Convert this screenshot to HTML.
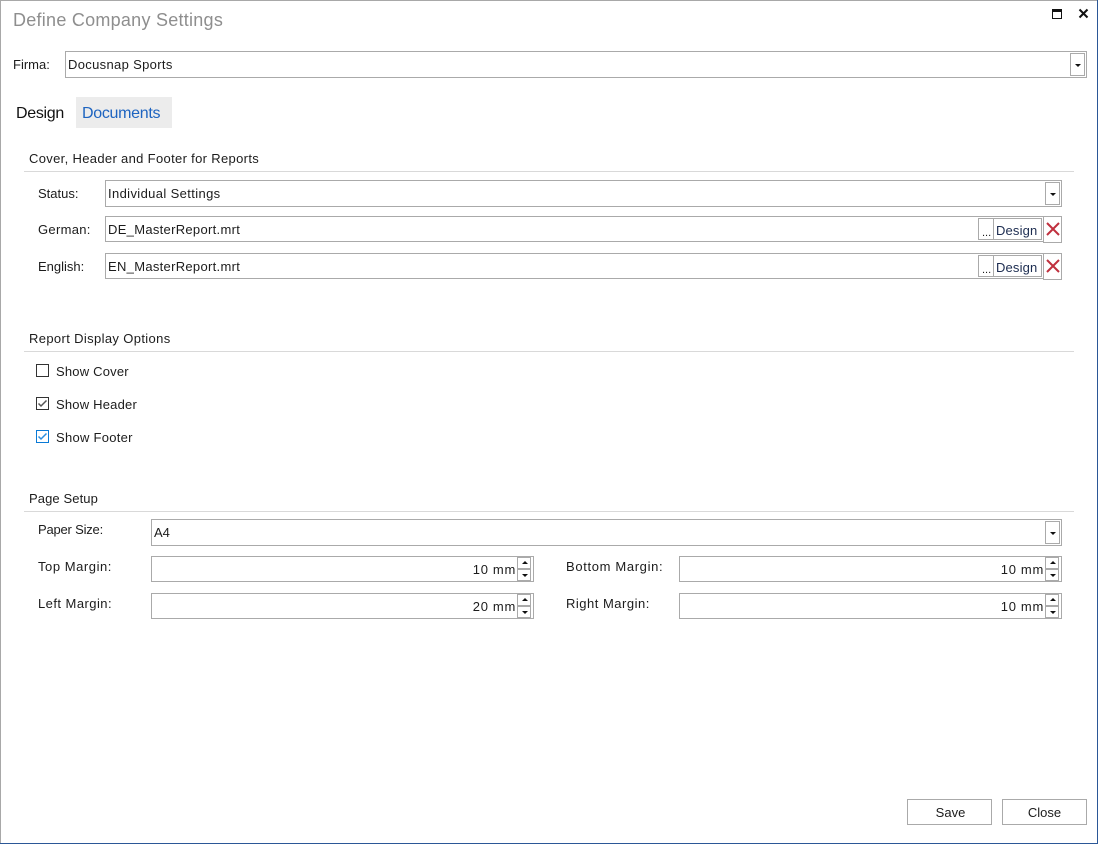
<!DOCTYPE html>
<html><head><meta charset="utf-8"><style>
html,body{margin:0;padding:0;background:#fff}
#w{position:relative;width:1098px;height:844px;overflow:hidden;background:#fff;font-family:"Liberation Sans",sans-serif;font-size:13px;color:#1c1c1c}
#w div{position:absolute;box-sizing:border-box}
.t{white-space:nowrap;line-height:16px;height:16px}
.b{border:1px solid #aaa;background:#fff}
.l{height:1px;background:#d9d9d9;left:24px;width:1050px}
.dd{width:15px;height:23px;border:1px solid #aaa;background:#fff}
.dd:after,.u:after,.d:after{content:"";position:absolute;left:4px;border-left:3px solid transparent;border-right:3px solid transparent}
.dd:after{top:10px;border-top:3px solid #111}
.u,.d{width:14px;height:12px;border:1px solid #aaa;background:#fff}
.u:after{top:3px;border-bottom:3px solid #111}
.d:after{top:4px;border-top:3px solid #111}
.r{text-align:right;letter-spacing:.7px}
</style></head><body><div id="w">
<div style="left:0;top:0;width:1098px;height:1px;background:#a8a8a8"></div>
<div style="left:0;top:0;width:1px;height:844px;background:#a8a8a8"></div>
<div style="left:1097px;top:0;width:1px;height:844px;background:#2b5797"></div>
<div style="left:0;top:843px;width:1098px;height:1px;background:#2b5797"></div>

<div class="t" style="left:13px;top:9px;height:22px;line-height:22px;font-size:18px;color:#8e8e8e;letter-spacing:.26px">Define Company Settings</div>
<svg style="position:absolute;left:1052px;top:8px" width="11" height="12"><rect x="0.5" y="1.5" width="9" height="9" fill="none" stroke="#111"/><rect x="0" y="1" width="10" height="3" fill="#111"/></svg>
<svg style="position:absolute;left:1078px;top:8px" width="11" height="11"><path d="M1.5 1.5L9.5 9.5M9.5 1.5L1.5 9.5" stroke="#111" stroke-width="2"/></svg>

<div class="t" style="left:13px;top:57px">Firma:</div>
<div class="b" style="left:65px;top:51px;width:1022px;height:27px"></div>
<div class="t" style="left:68px;top:57px;letter-spacing:.33px">Docusnap Sports</div>
<div class="dd" style="left:1070px;top:53px"></div>

<div class="t" style="left:16px;top:105px;height:18px;line-height:18px;font-size:16px;color:#111;letter-spacing:-.3px">Design</div>
<div style="left:76px;top:97px;width:96px;height:31px;background:#ececec"></div>
<div class="t" style="left:82px;top:105px;height:18px;line-height:18px;font-size:16px;color:#1e64c0;letter-spacing:-.3px">Documents</div>

<div class="t" style="left:29px;top:151px;letter-spacing:.33px">Cover, Header and Footer for Reports</div>
<div class="l" style="top:171px"></div>

<div class="t" style="left:38px;top:186px">Status:</div>
<div class="b" style="left:105px;top:180px;width:957px;height:27px"></div>
<div class="t" style="left:108px;top:186px;letter-spacing:.37px">Individual Settings</div>
<div class="dd" style="left:1045px;top:182px"></div>

<div class="t" style="left:38px;top:222px;letter-spacing:.3px">German:</div>
<div class="b" style="left:105px;top:216px;width:957px;height:26px"></div>
<div class="t" style="left:108px;top:222px;letter-spacing:.3px">DE_MasterReport.mrt</div>
<div class="b" style="left:978px;top:218px;width:16px;height:22px"></div>
<div class="t" style="left:982px;top:225px;font-size:11px">...</div>
<div class="b" style="left:993px;top:218px;width:49px;height:22px"></div>
<div class="t" style="left:996px;top:223px;color:#1c2c50;letter-spacing:.15px">Design</div>
<div class="b" style="left:1043px;top:216px;width:19px;height:27px"></div>
<svg style="position:absolute;left:1046px;top:222px" width="14" height="14"><path d="M1 1L13 13M13 1L1 13" stroke="#c0303e" stroke-width="2"/></svg>

<div class="t" style="left:38px;top:259px">English:</div>
<div class="b" style="left:105px;top:253px;width:957px;height:26px"></div>
<div class="t" style="left:108px;top:259px;letter-spacing:.3px">EN_MasterReport.mrt</div>
<div class="b" style="left:978px;top:255px;width:16px;height:22px"></div>
<div class="t" style="left:982px;top:262px;font-size:11px">...</div>
<div class="b" style="left:993px;top:255px;width:49px;height:22px"></div>
<div class="t" style="left:996px;top:260px;color:#1c2c50;letter-spacing:.15px">Design</div>
<div class="b" style="left:1043px;top:253px;width:19px;height:27px"></div>
<svg style="position:absolute;left:1046px;top:259px" width="14" height="14"><path d="M1 1L13 13M13 1L1 13" stroke="#c0303e" stroke-width="2"/></svg>

<div class="t" style="left:29px;top:331px;letter-spacing:.36px">Report Display Options</div>
<div class="l" style="top:351px"></div>

<svg style="position:absolute;left:36px;top:364px" width="13" height="13"><rect x="0.5" y="0.5" width="12" height="12" fill="#fff" stroke="#333"/></svg>
<div class="t" style="left:56px;top:364px;letter-spacing:.2px">Show Cover</div>
<svg style="position:absolute;left:36px;top:397px" width="13" height="13"><rect x="0.5" y="0.5" width="12" height="12" fill="#fff" stroke="#333"/><path d="M2.5 6.5L5 9L10.5 3.5" fill="none" stroke="#555" stroke-width="1.5"/></svg>
<div class="t" style="left:56px;top:397px;letter-spacing:.2px">Show Header</div>
<svg style="position:absolute;left:36px;top:430px" width="13" height="13"><rect x="0.5" y="0.5" width="12" height="12" fill="#fff" stroke="#0a7ad6"/><path d="M2.5 6.5L5 9L10.5 3.5" fill="none" stroke="#2a8ee0" stroke-width="1.5"/></svg>
<div class="t" style="left:56px;top:430px;letter-spacing:.27px">Show Footer</div>

<div class="t" style="left:29px;top:491px;letter-spacing:.1px">Page Setup</div>
<div class="l" style="top:511px"></div>

<div class="t" style="left:38px;top:522px;letter-spacing:-.2px">Paper Size:</div>
<div class="b" style="left:151px;top:519px;width:911px;height:27px"></div>
<div class="t" style="left:154px;top:525px">A4</div>
<div class="dd" style="left:1045px;top:521px"></div>

<div class="t" style="left:38px;top:559px;letter-spacing:.55px">Top Margin:</div>
<div class="b" style="left:151px;top:556px;width:383px;height:26px"></div>
<div class="t r" style="left:400px;width:116px;top:562px">10 mm</div>
<div class="u" style="left:517px;top:557px"></div><div class="d" style="left:517px;top:569px"></div>

<div class="t" style="left:566px;top:559px;letter-spacing:.65px">Bottom Margin:</div>
<div class="b" style="left:679px;top:556px;width:383px;height:26px"></div>
<div class="t r" style="left:928px;width:116px;top:562px">10 mm</div>
<div class="u" style="left:1045px;top:557px"></div><div class="d" style="left:1045px;top:569px"></div>

<div class="t" style="left:38px;top:596px;letter-spacing:.45px">Left Margin:</div>
<div class="b" style="left:151px;top:593px;width:383px;height:26px"></div>
<div class="t r" style="left:400px;width:116px;top:599px">20 mm</div>
<div class="u" style="left:517px;top:594px"></div><div class="d" style="left:517px;top:606px"></div>

<div class="t" style="left:566px;top:596px;letter-spacing:.5px">Right Margin:</div>
<div class="b" style="left:679px;top:593px;width:383px;height:26px"></div>
<div class="t r" style="left:928px;width:116px;top:599px">10 mm</div>
<div class="u" style="left:1045px;top:594px"></div><div class="d" style="left:1045px;top:606px"></div>

<div class="b" style="left:907px;top:799px;width:85px;height:26px"></div>
<div class="t" style="left:908px;width:85px;top:805px;text-align:center">Save</div>
<div class="b" style="left:1002px;top:799px;width:85px;height:26px"></div>
<div class="t" style="left:1002px;width:85px;top:805px;text-align:center">Close</div>
</div></body></html>
